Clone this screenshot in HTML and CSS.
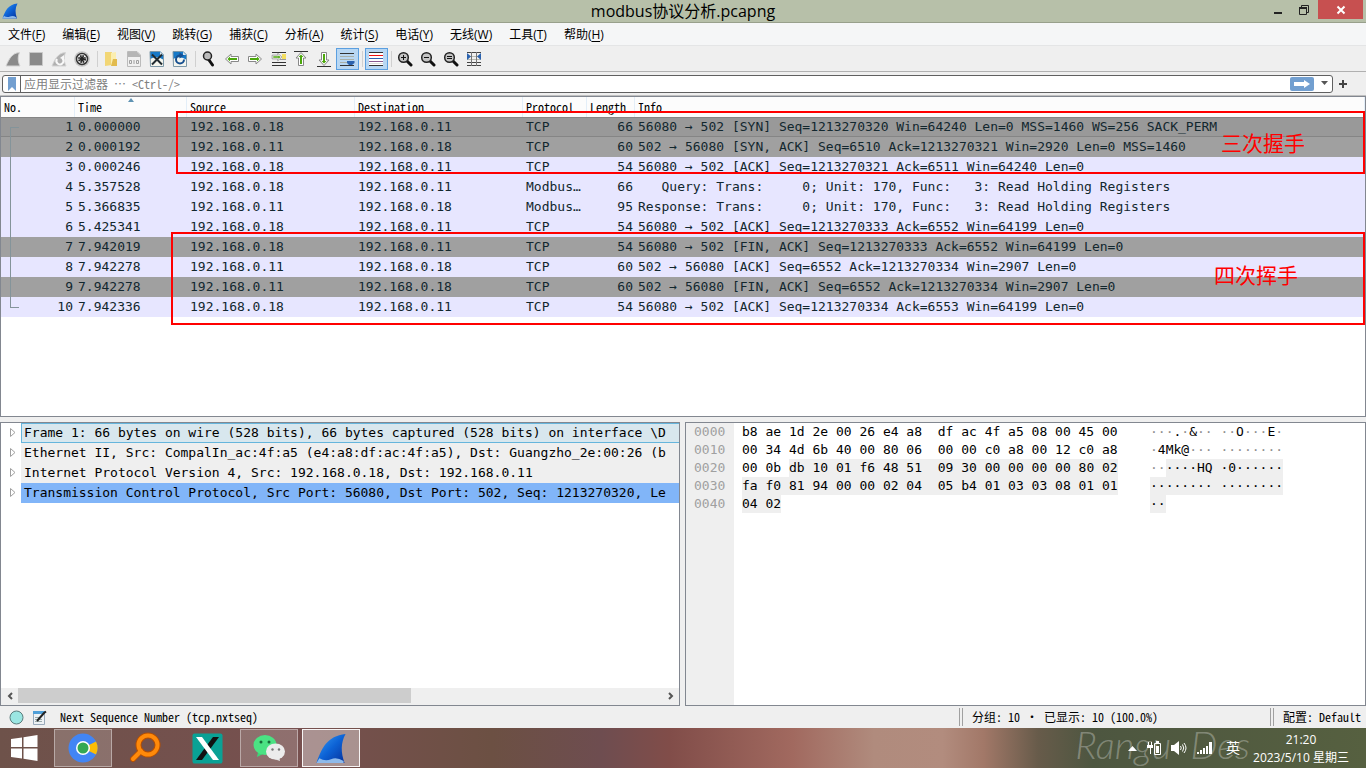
FILE: index.html
```html
<!DOCTYPE html>
<html lang="zh-CN">
<head>
<meta charset="utf-8">
<title>modbus协议分析.pcapng</title>
<link rel="stylesheet" href="styles.css">
</head>
<body>
<svg class="defs" aria-hidden="true">
  <defs>
    <linearGradient id="finBlue" x1="0" y1="0" x2="1" y2="1"><stop offset="0" stop-color="#3ba0f4"/><stop offset=".5" stop-color="#0d63d6"/><stop offset="1" stop-color="#06309a"/></linearGradient>
    <symbol id="fin" viewBox="0 0 16 16"><path d="M0.5 15.5C3 8 6 1.500 15.500 0.500C13 5 13 10 15 15.500Z" fill="url(#finBlue)"/><path d="M0.500 15.500L2 13Q5 14.800 8 13.500T14.500 14.500V15.500Z" fill="#8fbaea"/></symbol>
    <symbol id="lens" viewBox="0 0 16 16"><path d="M9.500 9.500L14 14" stroke="#111" stroke-width="3" stroke-linecap="round"/><circle cx="6.500" cy="6.500" r="4.800" fill="#c4c4c4" stroke="#222" stroke-width="1.500"/></symbol>
    <symbol id="arrow" viewBox="0 0 16 16"><path d="M1.500 8L7 3V5.500H14.500V10.500H7V13Z" fill="#fff" stroke="#888" stroke-width="1"/><path d="M3.500 8L6 5.500V7H13V9H6V10.500Z" fill="#4ca80c"/></symbol>
    <symbol id="page" viewBox="0 0 16 16"><path d="M1 0H11L15 4V16H1Z" fill="#f4f5ee"/><path d="M1 0H11L15 4V9Q8 4 1 8Z" fill="#1679c8"/><path d="M11 0V4H15Z" fill="#d8e8f4"/><path d="M1 .5H11L14.500 4V15.500H1.500Z" fill="none" stroke="#7d98a8"/></symbol>
  </defs>
</svg>

<header class="titlebar">
  <svg class="app-icon"><use href="#fin"/></svg>
  <h1 class="title">modbus协议分析.pcapng</h1>
  <div class="window-buttons">
    <button class="win-btn" aria-label="最小化"><svg width="12" height="12"><path d="M2 9H10" stroke="#222" stroke-width="2"/></svg></button>
    <button class="win-btn" aria-label="还原"><svg width="12" height="12"><path d="M3.500 3V1.500H10.500V8.500H9" fill="none" stroke="#222"/><path d="M1.500 4.500H8.500V10.500H1.500Z" fill="none" stroke="#222"/><path d="M1 4H9" stroke="#222" stroke-width="2"/></svg></button>
    <button class="win-btn close" aria-label="关闭"><svg width="12" height="12"><path d="M2.500 2.500L9.500 9.500M9.500 2.500L2.500 9.500" stroke="#fff" stroke-width="2"/></svg></button>
  </div>
</header>

<nav class="menubar">
  <button>文件(<u>F</u>)</button><button>编辑(<u>E</u>)</button><button>视图(<u>V</u>)</button><button>跳转(<u>G</u>)</button><button>捕获(<u>C</u>)</button><button>分析(<u>A</u>)</button><button>统计(<u>S</u>)</button><button>电话(<u>Y</u>)</button><button>无线(<u>W</u>)</button><button>工具(<u>T</u>)</button><button>帮助(<u>H</u>)</button>
</nav>

<div class="toolbar" role="toolbar">
  <button class="tool" aria-label="开始捕获"><svg viewBox="0 0 16 16"><path d="M1 15C4 8 7 2 14.500 1.500C12.500 6 13 11 15 15Z" fill="#8a8a8a" stroke="#d4d4d4"/></svg></button>
  <button class="tool" aria-label="停止捕获"><svg viewBox="0 0 16 16"><path d="M1.500 1.500H14.500V14.500H1.500Z" fill="#8a8a8a" stroke="#c8c8c8"/></svg></button>
  <button class="tool" aria-label="重新开始捕获"><svg viewBox="0 0 16 16"><path d="M1 15C4 8 7 2 14.500 1.500C12.500 6 13 11 15 15Z" fill="#b0b0b0" stroke="#d4d4d4"/><path d="M11.500 7.500A3.500 3.500 0 1 1 6 8" fill="none" stroke="#f8f8f8" stroke-width="2"/><path d="M9 7L13 4V9Z" fill="#f8f8f8"/></svg></button>
  <button class="tool" aria-label="捕获选项"><svg viewBox="0 0 16 16"><circle cx="8" cy="8" r="7.800" fill="#c4c4c4"/><circle cx="8" cy="8" r="5.500" fill="#fff" stroke="#333" stroke-width="1.500"/><circle cx="8" cy="8" r="3" fill="none" stroke="#222" stroke-width="2" stroke-dasharray="1.600 .756"/><circle cx="8" cy="8" r="2.200" fill="#222"/></svg></button>
  <span class="sep"></span>
  <button class="tool" aria-label="打开"><svg viewBox="0 0 16 16"><path d="M2 1H9V14L2 15Z" fill="#f2d675"/><path d="M8 2L13 1V12L8 15Z" fill="#fbeeb0"/><path d="M10 8H14V15H8Z" fill="#e2bb4d"/></svg></button>
  <button class="tool" aria-label="保存"><svg viewBox="0 0 16 16"><path d="M1.500 .5H11L14.500 4V15.500H1.500Z" fill="#f0f0f0" stroke="#bbb"/><path d="M2 1H11L14 4V6H2Z" fill="#b5b5b5"/><path d="M3.500 9.500H5.500V12.500H3.500ZM8 9V13M10.500 9.500H12.500V12.500H10.500Z" fill="none" stroke="#a0a0a0"/></svg></button>
  <button class="tool" aria-label="关闭文件"><svg viewBox="0 0 16 16"><use href="#page"/><path d="M3 3.500L13 13.500M13 3.500L3 13.500" stroke="#202a30" stroke-width="2"/></svg></button>
  <button class="tool" aria-label="重新加载"><svg viewBox="0 0 16 16"><use href="#page"/><path d="M12 8.500A4 4 0 1 1 8 4.500" fill="none" stroke="#174f90" stroke-width="2"/><path d="M7.500 1.500L12 4.500L7.500 7.500Z" fill="#174f90"/></svg></button>
  <span class="sep"></span>
  <button class="tool" aria-label="查找"><svg viewBox="0 0 16 16"><path d="M8 9L11.500 14" stroke="#111" stroke-width="3" stroke-linecap="round"/><circle cx="6.500" cy="5" r="4" fill="#bbb" stroke="#222" stroke-width="1.500"/></svg></button>
  <button class="tool" aria-label="后退"><svg viewBox="0 0 16 16"><use href="#arrow"/></svg></button>
  <button class="tool" aria-label="前进"><svg viewBox="0 0 16 16"><use href="#arrow" transform="rotate(180 8 8)"/></svg></button>
  <button class="tool" aria-label="转到分组"><svg viewBox="0 0 16 16"><path d="M2 1.500H16M2 11.500H16M2 14.500H16" stroke="#333"/><path d="M12 3H16V8H12Z" fill="#f5df60"/><path d="M10 8.500H16" stroke="#999"/><use href="#arrow" transform="rotate(180 7 6)" width="14" height="12" x="0" y="0"/></svg></button>
  <button class="tool" aria-label="首个分组"><svg viewBox="0 0 16 16"><path d="M1 .5H15" stroke="#333"/><use href="#arrow" transform="rotate(90 8 8)"/></svg></button>
  <button class="tool" aria-label="末个分组"><svg viewBox="0 0 16 16"><path d="M1 15.500H15" stroke="#333"/><use href="#arrow" transform="rotate(-90 8 8)"/></svg></button>
  <button class="tool on" aria-pressed="true" aria-label="自动滚动"><svg viewBox="0 0 16 16"><path d="M1 2.500H15M1 14.500H15" stroke="#333"/><path d="M1 5.500H15M1 8.500H15M1 11.500H9" stroke="#aab0a8"/><path d="M8 10H15.500V12L13 14H10L8 12Z" fill="#2b62ae"/></svg></button>
  <span class="sep"></span>
  <button class="tool on" aria-pressed="true" aria-label="着色"><svg viewBox="0 0 16 16"><path d="M1 1H15V15H1Z" fill="#fff"/><path d="M1 1H15V2H1ZM1 14H15V15H1Z" fill="#333"/><path d="M1 4H15V5H1Z" fill="#f01010"/><path d="M1 7H15V8H1Z" fill="#3060b0"/><path d="M1 10H15V11H1Z" fill="#8a5a90"/><path d="M1 12H15V13H1Z" fill="#ddd"/></svg></button>
  <span class="sep"></span>
  <button class="tool" aria-label="放大"><svg viewBox="0 0 16 16"><use href="#lens"/><path d="M4 6.500H9M6.500 4V9" stroke="#111"/></svg></button>
  <button class="tool" aria-label="缩小"><svg viewBox="0 0 16 16"><use href="#lens"/><path d="M4 6.500H9" stroke="#111"/></svg></button>
  <button class="tool" aria-label="正常大小"><svg viewBox="0 0 16 16"><use href="#lens"/><path d="M4 5.500H9M4 7.500H9" stroke="#111"/></svg></button>
  <button class="tool" aria-label="调整列宽"><svg viewBox="0 0 16 16"><path d="M1 1.500H15M1 14.500H15M1 11.500H15" stroke="#444"/><path d="M1 5.500H15M1 8.500H15" stroke="#b8bab0"/><path d="M5.500 1V15M10.500 1V15" stroke="#777"/><path d="M1 2L5 5.500L1 9ZM15 2L11 5.500L15 9Z" fill="#2b62ae"/></svg></button>
</div>

<div class="filterbar">
  <div class="filter">
    <button class="bookmark" aria-label="书签"><svg width="8" height="14"><path d="M0 0H8V14L4 10L0 14Z" fill="#729fd0"/></svg></button>
    <input type="text" aria-label="显示过滤器" placeholder="应用显示过滤器 ⋯ &lt;Ctrl-/&gt;">
    <button class="apply" aria-label="应用"><svg width="18" height="8"><path d="M1 2H11V0L17 4L11 8V6H1Z" fill="#fff"/></svg></button>
    <button class="drop" aria-label="历史"><svg width="8" height="5"><path d="M0 0H7L3.500 4Z" fill="#555"/></svg></button>
  </div>
  <button class="add" aria-label="添加"><svg width="8" height="8"><path d="M4 0V8M0 4H8" stroke="#444" stroke-width="2"/></svg></button>
</div>

<main class="panes">
  <section class="pane packets">
    <table>
      <colgroup><col class="c-no"><col class="c-time"><col class="c-addr"><col class="c-addr"><col class="c-proto"><col class="c-len"><col></colgroup>
      <thead><tr><th>No.</th><th class="sorted">Time</th><th>Source</th><th>Destination</th><th>Protocol</th><th>Length</th><th>Info</th></tr></thead>
      <tbody>
        <tr class="gray current"><td>1</td><td>0.000000</td><td>192.168.0.18</td><td>192.168.0.11</td><td>TCP</td><td>66</td><td>56080 → 502 [SYN] Seq=1213270320 Win=64240 Len=0 MSS=1460 WS=256 SACK_PERM</td></tr>
        <tr class="gray"><td>2</td><td>0.000192</td><td>192.168.0.11</td><td>192.168.0.18</td><td>TCP</td><td>60</td><td>502 → 56080 [SYN, ACK] Seq=6510 Ack=1213270321 Win=2920 Len=0 MSS=1460</td></tr>
        <tr><td>3</td><td>0.000246</td><td>192.168.0.18</td><td>192.168.0.11</td><td>TCP</td><td>54</td><td>56080 → 502 [ACK] Seq=1213270321 Ack=6511 Win=64240 Len=0</td></tr>
        <tr><td>4</td><td>5.357528</td><td>192.168.0.18</td><td>192.168.0.11</td><td>Modbus…</td><td>66</td><td>   Query: Trans:     0; Unit: 170, Func:   3: Read Holding Registers</td></tr>
        <tr><td>5</td><td>5.366835</td><td>192.168.0.11</td><td>192.168.0.18</td><td>Modbus…</td><td>95</td><td>Response: Trans:     0; Unit: 170, Func:   3: Read Holding Registers</td></tr>
        <tr><td>6</td><td>5.425341</td><td>192.168.0.18</td><td>192.168.0.11</td><td>TCP</td><td>54</td><td>56080 → 502 [ACK] Seq=1213270333 Ack=6552 Win=64199 Len=0</td></tr>
        <tr class="gray"><td>7</td><td>7.942019</td><td>192.168.0.18</td><td>192.168.0.11</td><td>TCP</td><td>54</td><td>56080 → 502 [FIN, ACK] Seq=1213270333 Ack=6552 Win=64199 Len=0</td></tr>
        <tr><td>8</td><td>7.942278</td><td>192.168.0.11</td><td>192.168.0.18</td><td>TCP</td><td>60</td><td>502 → 56080 [ACK] Seq=6552 Ack=1213270334 Win=2907 Len=0</td></tr>
        <tr class="gray"><td>9</td><td>7.942278</td><td>192.168.0.11</td><td>192.168.0.18</td><td>TCP</td><td>60</td><td>502 → 56080 [FIN, ACK] Seq=6552 Ack=1213270334 Win=2907 Len=0</td></tr>
        <tr><td>10</td><td>7.942336</td><td>192.168.0.18</td><td>192.168.0.11</td><td>TCP</td><td>54</td><td>56080 → 502 [ACK] Seq=1213270334 Ack=6553 Win=64199 Len=0</td></tr>
      </tbody>
    </table>
    <span class="stream-bracket"></span>
    <div class="mark mark-open"><span>三次握手</span></div>
    <div class="mark mark-close"><span>四次挥手</span></div>
  </section>

  <div class="lower">
    <section class="pane details">
      <ul class="tree">
        <li class="current"><button aria-label="展开"><svg width="6" height="9"><path d="M.5 .5L5 4.500L.5 8.500Z" fill="none" stroke="#a0a0a0"/></svg></button><span>Frame 1: 66 bytes on wire (528 bits), 66 bytes captured (528 bits) on interface \D</span></li>
        <li><button aria-label="展开"><svg width="6" height="9"><path d="M.5 .5L5 4.500L.5 8.500Z" fill="none" stroke="#a0a0a0"/></svg></button><span>Ethernet II, Src: CompalIn_ac:4f:a5 (e4:a8:df:ac:4f:a5), Dst: Guangzho_2e:00:26 (b</span></li>
        <li><button aria-label="展开"><svg width="6" height="9"><path d="M.5 .5L5 4.500L.5 8.500Z" fill="none" stroke="#a0a0a0"/></svg></button><span>Internet Protocol Version 4, Src: 192.168.0.18, Dst: 192.168.0.11</span></li>
        <li class="selected"><button aria-label="展开"><svg width="6" height="9"><path d="M.5 .5L5 4.500L.5 8.500Z" fill="none" stroke="#a0a0a0"/></svg></button><span>Transmission Control Protocol, Src Port: 56080, Dst Port: 502, Seq: 1213270320, Le</span></li>
      </ul>
      <div class="hscroll">
        <button aria-label="向左"><svg width="6" height="8"><path d="M5 1L2 4L5 7" fill="none" stroke="#555" stroke-width="2"/></svg></button>
        <div class="track"><div class="thumb"></div></div>
        <button aria-label="向右"><svg width="6" height="8"><path d="M1 1L4 4L1 7" fill="none" stroke="#555" stroke-width="2"/></svg></button>
      </div>
    </section>
    <section class="pane bytes">
      <pre class="offsets">0000
0010
0020
0030
0040</pre>
      <pre class="hex">b8 ae 1d 2e 00 26 e4 a8  df ac 4f a5 08 00 45 00
00 34 4d 6b 40 00 80 06  00 00 c0 a8 00 12 c0 a8
00 0b <mark>db 10 01 f6 48 51  09 30 00 00 00 00 80 02</mark>
<mark>fa f0 81 94 00 00 02 04  05 b4 01 03 03 08 01 01</mark>
<mark>04 02</mark></pre>
      <pre class="ascii"><i>···</i>.<i>·</i>&amp;<i>·· ··</i>O<i>···</i>E<i>·</i>
<i>·</i>4Mk@<i>··· ········</i>
<i>··</i><mark>····HQ ·0······</mark>
<mark>········ ········</mark>
<mark>··</mark></pre>
    </section>
  </div>
</main>

<footer class="statusbar">
  <button aria-label="专家信息"><svg width="15" height="15"><circle cx="7.500" cy="7.500" r="6.500" fill="#9be6e2" stroke="#5a7c7c"/></svg></button>
  <button aria-label="注释"><svg width="14" height="15"><path d="M.5 1.500H11.500V14.500H.5Z" fill="#eef2f5" stroke="#9ab"/><path d="M0 1H12V4H0Z" fill="#4f9fd8"/><path d="M2 7.500H8M2 9.500H9M2 11.500H9" stroke="#9aa"/><path d="M4 11L11 3L13 1.500" stroke="#222" stroke-width="2" fill="none"/></svg></button>
  <span class="status-field">Next Sequence Number (tcp.nxtseq)</span>
  <span class="status-count">分组: 10 <span class="dot">·</span> 已显示: 10 (100.0%)</span>
  <span class="status-profile">配置: Default</span>
</footer>

<div class="taskbar">
  <button class="task start" aria-label="开始"><svg width="27" height="26"><path d="M0 4L11 2.500V12H0ZM12.500 2.300L26.500 0V12H12.500ZM0 13.500H11V23.500L0 22ZM12.500 13.500H26.500V26L12.500 23.700Z" fill="#fff"/></svg></button>
  <button class="task open" aria-label="浏览器"><svg width="30" height="30"><circle cx="15" cy="15" r="14.500" fill="#4285f4"/><path d="M15 15L28 8.500A14.500 14.500 0 0 1 28 21.500Z" fill="#fbbc05"/><circle cx="15" cy="15" r="7" fill="#fff"/><circle cx="15" cy="15" r="5.500" fill="#34a853"/></svg></button>
  <button class="task" aria-label="搜索"><svg width="32" height="32"><path d="M12 19L4 27" stroke="#b85000" stroke-width="6" stroke-linecap="round"/><circle cx="19" cy="13" r="9.500" fill="none" stroke="#b85000" stroke-width="6"/><path d="M12 19L4 27" stroke="#ff8a0a" stroke-width="4" stroke-linecap="round"/><circle cx="19" cy="13" r="9.500" fill="none" stroke="#ff8a0a" stroke-width="4"/></svg></button>
  <button class="task" aria-label="终端"><svg width="31" height="31"><rect x=".5" y=".5" width="30" height="30" rx="2" fill="#0aa195"/><path d="M21 4H27L10 27H4Z" fill="#111"/><path d="M4 4H10L27 27H21Z" fill="#fff"/></svg></button>
  <button class="task open" aria-label="微信"><svg width="34" height="30"><path d="M5 24L6 19L11 21Z" fill="#3fd477"/><ellipse cx="13" cy="12" rx="11.500" ry="10" fill="#4be283"/><circle cx="9" cy="9" r="1.500" fill="#166b38"/><circle cx="17" cy="9" r="1.500" fill="#166b38"/><path d="M28 28L27 23L22 26Z" fill="#e4e4e4"/><ellipse cx="23.500" cy="18.500" rx="9.500" ry="8" fill="#ececec"/><circle cx="20.500" cy="16.500" r="1.200" fill="#777"/><circle cx="27" cy="16.500" r="1.200" fill="#777"/></svg></button>
  <button class="task open active" aria-label="Wireshark"><svg width="32" height="31"><use href="#fin"/></svg></button>
  <span class="wallpaper-script" aria-hidden="true">Rangu&nbsp; Des</span>
  <div class="tray">
    <svg width="9" height="5"><path d="M0 5L4.500 0L9 5Z" fill="#fff"/></svg>
    <svg width="14" height="16"><path d="M7.500 3.500H13.500V14.500H7.500Z" fill="none" stroke="#fff"/><path d="M9 1H12V3H9ZM9 6H12V13H9ZM1 2H2V5H4V2H5V5H6V8H4V14H3V8H0V5H1Z" fill="#fff"/></svg>
    <svg width="16" height="14"><path d="M0 4H3L8 0V14L3 10H0Z" fill="#fff"/><path d="M9.500 5Q11 7 9.500 9M11.500 3.500Q14 7 11.500 10.500M13 2Q17 7 13 12" fill="none" stroke="#fff"/></svg>
    <svg width="16" height="12"><path d="M0 10H2V12H0ZM3 8H5V12H3ZM6 6H8V12H6ZM9 4H11V12H9ZM12 0H15V12H12Z" fill="#fff"/></svg>
    <span class="ime">英</span>
  </div>
  <div class="clock"><span>21:20</span><span>2023/5/10 星期三</span></div>
</div>
</body>
</html>
```

FILE: styles.css
```css
* { box-sizing: border-box; }

:root {
  --ui-mono: "Noto Sans Mono CJK SC", "Noto Sans CJK SC", monospace;
  --data-mono: "DejaVu Sans Mono", monospace;
}

body {
  margin: 0;
  height: 100vh;
  display: flex;
  flex-direction: column;
  overflow: hidden;
  background: #efefef;
  color: #000;
  font: 12px/16px "Open Sans", "Noto Sans CJK SC", sans-serif;
}

button {
  display: flex;
  align-items: center;
  justify-content: center;
  flex: none;
  margin: 0;
  padding: 0;
  border: 0;
  background: none;
  color: inherit;
  font: inherit;
}

svg { display: block; }

.defs { position: absolute; width: 0; height: 0; }

/* Title bar */
.titlebar {
  display: grid;
  grid-template-columns: 1fr auto 1fr;
  height: 23px;
  background: #b7c0a9;
  border-bottom: 1px solid #98a08c;
}
.app-icon { width: 16px; height: 16px; margin: 3px 2px; }
.title { margin: 0; font-size: 16px; font-weight: 400; line-height: 23px; }
.window-buttons { display: flex; justify-content: flex-end; padding-right: 3px; }
.win-btn { width: 26px; height: 19px; }
.win-btn.close { width: 45px; margin-left: 1px; background: #c75050; }

/* Menu */
.menubar {
  display: flex;
  gap: 17px;
  height: 23px;
  padding: 0 8px;
  background: #f5f6f7;
  border-bottom: 1px solid #e4e5e6;
}
.menubar button { display: block; line-height: 24px; }
.menubar u { text-underline-offset: 2px; }

/* Toolbar */
.toolbar {
  display: flex;
  align-items: flex-start;
  height: 26px;
  padding: 2px 0 0 2px;
  border-bottom: 1px solid #b0b0b0;
}
.tool { justify-content: flex-start; width: 23px; height: 22px; padding-left: 2px; border: 1px solid transparent; }
.tool svg { width: 16px; height: 16px; }
.tool.on { background: #b8d7f3; border-color: #5b9fe0; }
.sep { width: 3px; height: 16px; margin: 3px 0 0 3px; border-left: 1px solid #d0d0d0; }

/* Display filter */
.filterbar {
  display: flex;
  align-items: center;
  height: 24px;
  padding-left: 2px;
  border-bottom: 1px solid #c0c0c0;
}
.filter {
  flex: 1;
  display: flex;
  align-items: center;
  height: 18px;
  background: #fff;
  border: 1px solid #606060;
  border-radius: 3px;
}
.bookmark { width: 18px; height: 16px; border-right: 1px solid #606060; }
.filter input {
  flex: 1;
  min-width: 0;
  height: 16px;
  padding: 0 3px;
  border: 0;
  background: none;
  font: 12px/16px var(--ui-mono);
}
.filter input::placeholder { color: #808080; opacity: 1; }
.apply { width: 24px; height: 14px; border-radius: 2px; background: #729fd0; }
.drop { width: 18px; height: 16px; padding-left: 4px; }
.add { width: 20px; height: 18px; margin-right: 13px; }

/* Panes */
.panes { flex: 1; min-height: 0; display: flex; flex-direction: column; gap: 5px; }
.pane { background: #fff; border: 1px solid #828790; overflow: hidden; }

.packets { position: relative; flex: 320; min-height: 0; }
.packets table { width: 100%; table-layout: fixed; border-collapse: separate; border-spacing: 0; }
.c-no { width: 74px; }
.c-time { width: 112px; }
.c-addr { width: 168px; }
.c-proto { width: 64px; }
.c-len { width: 48px; }
.packets th {
  height: 20px;
  padding: 0 3px;
  border-right: 1px solid #e3eef8;
  background: #fcfcfc;
  text-align: left;
  font: 12px/18px var(--ui-mono);
  white-space: nowrap;
}
.packets th.sorted { position: relative; }
.packets th.sorted::after {
  content: "";
  position: absolute;
  top: 1px;
  left: 50%;
  border: 3px solid transparent;
  border-top: 0;
  border-bottom: 4px solid #5f93b3;
  margin-left: -3px;
}
.packets td {
  height: 20px;
  padding: 0 3px;
  background: #e7e6ff;
  color: #12272e;
  font: 13px/20px var(--data-mono);
  white-space: pre;
}
.packets td:nth-child(1), .packets td:nth-child(6) { padding-right: 2px; text-align: right; }
.packets .gray td { background: #a0a0a0; }
.packets .gray.current td { background: #999; border: 1px solid #858585; border-width: 1px 0; line-height: 18px; }

.stream-bracket {
  position: absolute;
  left: 9px;
  top: 30px;
  width: 9px;
  height: 181px;
  border: 1px solid #84949a;
  border-right: 0;
}
.mark {
  position: absolute;
  right: 0;
  display: flex;
  justify-content: flex-end;
  border: 2px solid #f00;
  color: #f00;
  font: 21px/28px "Noto Sans CJK SC", sans-serif;
}
.mark-open { left: 175px; top: 14px; height: 63px; padding: 15px 58px 0 0; }
.mark-close { left: 170px; top: 135px; height: 93px; padding: 26px 65px 0 0; }

.lower { flex: 285; min-height: 0; display: flex; gap: 5px; }
.details { flex: 680; min-width: 0; display: flex; flex-direction: column; }
.bytes { flex: 681; min-width: 0; display: flex; }

.tree {
  flex: 1;
  margin: 0;
  padding: 0;
  list-style: none;
  font: 13px/20px var(--data-mono);
  overflow: hidden;
}
.tree li { display: flex; }
.tree button { width: 20px; padding-left: 3px; }
.tree span { flex: 1; min-width: 0; height: 20px; padding-left: 3px; background: #efefef; white-space: pre; overflow: hidden; }
.tree .current span { padding-left: 2px; line-height: 18px; background: #d8e7ee; border: 1px solid #66b5dc; border-right: 0; }
.tree .selected span { background: #81b5f8; }

.hscroll { display: flex; height: 17px; padding-bottom: 1px; background: #efefef; }
.hscroll button { width: 17px; }
.track { flex: 1; }
.thumb { width: 61%; height: 15px; background: #cdcdcd; }

.bytes pre { flex: none; margin: 0; font: 13px/18px var(--data-mono); }
.bytes .offsets { width: 48px; padding-left: 8px; background: #efefef; color: #a0a0a0; }
.bytes .hex { width: 416px; padding-left: 8px; }
.bytes i { font-style: normal; color: #909090; }
.bytes mark { display: inline-block; height: 18px; background: #efefef; color: inherit; vertical-align: top; }

/* Status bar */
.statusbar {
  display: flex;
  align-items: center;
  height: 22px;
  padding-left: 9px;
  gap: 9px;
  font: 12px/18px var(--ui-mono);
  white-space: pre;
}
.statusbar .dot { display: inline-block; width: 12px; text-align: center; }
.status-field { flex: 1; padding-left: 4px; }
.status-count, .status-profile { border-left: 4px double #a0a0a0; padding-left: 9px; height: 18px; }
.status-count { width: 302px; }
.status-profile { width: 96px; }

/* Task bar */
.taskbar {
  position: relative;
  display: flex;
  gap: 4px;
  height: 40px;
  background: linear-gradient(90deg, #6e524a 0%, #77504f 22%, #6c5043 36%, #6e4d50 44%, #814d49 49%, #a1695f 58%, #b08b7d 64%, #b28c7e 69%, #a27868 72%, #675b4a 76%, #4d5640 80%, #566040 100%);
}
.task { width: 58px; height: 38px; margin-top: 1px; }
.task.start { width: 50px; padding-right: 2px; }
.task.open { background: rgba(255, 255, 255, .18); border: 1px solid rgba(255, 255, 255, .4); }
.task.active { background: rgba(255, 255, 255, .38); border-color: rgba(255, 255, 255, .9); }
.wallpaper-script {
  position: absolute;
  right: 116px;
  top: -6px;
  color: rgba(255, 255, 255, .3);
  font: italic 300 38px/44px Lato, sans-serif;
}
.tray {
  position: relative;
  flex: 1;
  display: flex;
  align-items: center;
  justify-content: flex-end;
  gap: 10px;
}
.ime { margin-left: 3px; color: #fff; font-size: 14px; }
.clock {
  position: relative;
  display: flex;
  flex-direction: column;
  align-items: center;
  width: 122px;
  padding: 3px 8px 0 0;
  color: #fff;
  line-height: 18px;
}
```
